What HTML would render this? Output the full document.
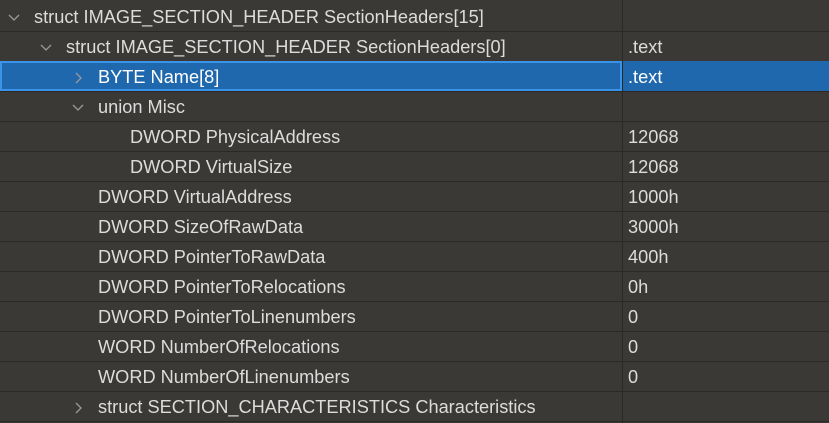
<!DOCTYPE html>
<html><head><style>
body{margin:0;width:829px;height:423px;overflow:hidden;background:#3b3935;font-family:"Liberation Sans","Noto Sans CJK SC",sans-serif;font-size:18.2px;color:#dcdcdc;position:relative}
.r{position:absolute;left:0;width:829px;height:30px;border-bottom:1px solid #2a2926;box-sizing:content-box}
.t{position:absolute;top:1px;line-height:30px;white-space:nowrap}
.v{position:absolute;left:628px;top:1px;line-height:30px}
.c{position:absolute;top:2px;height:30px;width:14px}
.col{position:absolute;left:622px;top:0;width:1px;height:423px;background:#2a2926}
.sel{background:#1f68ad}
.box{position:absolute;left:0;top:0;width:618px;height:26px;border:2px solid #3a93e6}
</style></head><body>
<div class="col"></div>
<div class="r" style="top:1px"><svg class="c" style="left:7px" viewBox="0 0 14 30"><path d="M2 12l5 5 5-5" stroke="#9a9a9a" stroke-width="1.3" fill="none"/></svg><span class="t" style="left:34px">struct IMAGE_SECTION_HEADER SectionHeaders[15]</span></div>
<div class="r" style="top:31px"><svg class="c" style="left:39px" viewBox="0 0 14 30"><path d="M2 12l5 5 5-5" stroke="#9a9a9a" stroke-width="1.3" fill="none"/></svg><span class="t" style="left:66px">struct IMAGE_SECTION_HEADER SectionHeaders[0]</span><span class="v">.text</span></div>
<div class="r sel" style="top:61px"><div class="box"></div><div style="position:absolute;left:622px;top:0;width:1px;height:30px;background:#2a2926"></div><svg class="c" style="left:71px" viewBox="0 0 14 30"><path d="M5 10l5 5-5 5" stroke="#9a9a9a" stroke-width="1.3" fill="none"/></svg><span class="t" style="left:98px;color:#fff">BYTE Name[8]</span><span class="v" style="color:#fff">.text</span></div>
<div class="r" style="top:91px"><svg class="c" style="left:71px" viewBox="0 0 14 30"><path d="M2 12l5 5 5-5" stroke="#9a9a9a" stroke-width="1.3" fill="none"/></svg><span class="t" style="left:98px">union Misc</span></div>
<div class="r" style="top:121px"><span class="t" style="left:130px">DWORD PhysicalAddress</span><span class="v">12068</span></div>
<div class="r" style="top:151px"><span class="t" style="left:130px">DWORD VirtualSize</span><span class="v">12068</span></div>
<div class="r" style="top:181px"><span class="t" style="left:98px">DWORD VirtualAddress</span><span class="v">1000h</span></div>
<div class="r" style="top:211px"><span class="t" style="left:98px">DWORD SizeOfRawData</span><span class="v">3000h</span></div>
<div class="r" style="top:241px"><span class="t" style="left:98px">DWORD PointerToRawData</span><span class="v">400h</span></div>
<div class="r" style="top:271px"><span class="t" style="left:98px">DWORD PointerToRelocations</span><span class="v">0h</span></div>
<div class="r" style="top:301px"><span class="t" style="left:98px">DWORD PointerToLinenumbers</span><span class="v">0</span></div>
<div class="r" style="top:331px"><span class="t" style="left:98px">WORD NumberOfRelocations</span><span class="v">0</span></div>
<div class="r" style="top:361px"><span class="t" style="left:98px">WORD NumberOfLinenumbers</span><span class="v">0</span></div>
<div class="r" style="top:391px"><svg class="c" style="left:71px" viewBox="0 0 14 30"><path d="M5 10l5 5-5 5" stroke="#9a9a9a" stroke-width="1.3" fill="none"/></svg><span class="t" style="left:98px">struct SECTION_CHARACTERISTICS Characteristics</span></div>
</body></html>
